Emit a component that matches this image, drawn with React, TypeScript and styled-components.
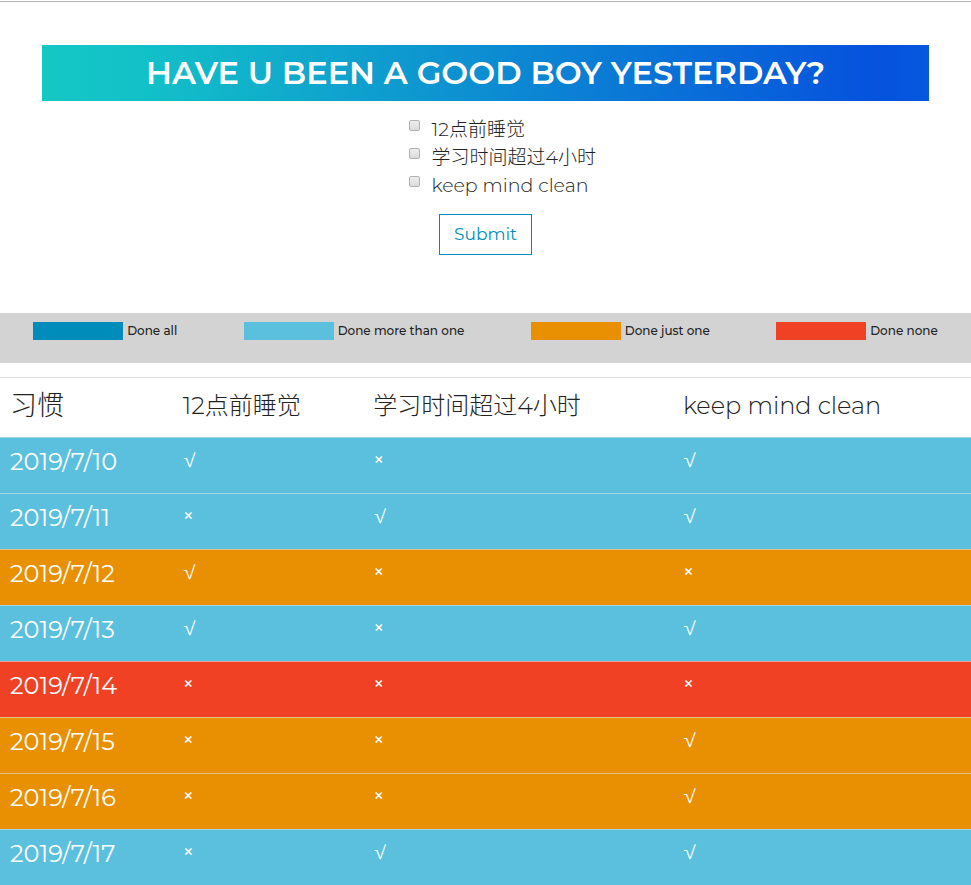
import React, { useState } from 'react';
import styled, { createGlobalStyle } from 'styled-components';

const GlobalStyle = createGlobalStyle`
  *, *::before, *::after { box-sizing: border-box; }
  body {
    margin: 0;
    background: #fff;
    color: #222;
    font-family: Montserrat, Inter, "Noto Sans CJK SC", sans-serif;
    font-weight: 300;
  }
`;

const palette = {
  all: '#008cba',
  many: '#5bc0de',
  one: '#e99002',
  none: '#f04124',
};

type Level = keyof typeof palette;

const Page = styled.div`
  padding-top: 1px;
`;

const Panel = styled.section`
  border-top: 1px solid #b4b4b4;
  padding: 43px 42px 58px;
`;

const Title = styled.h1`
  margin: 0 0 14px;
  background: linear-gradient(90deg, #14c8c5 0%, #12c0c8 12%, #0652dd 94%, #0658de 100%);
  color: #fff;
  font-size: 32px;
  line-height: 56px;
  font-weight: 600;
  text-align: center;
  white-space: nowrap;
`;

const Form = styled.form`
  display: flex;
  flex-direction: column;
`;

const Habits = styled.ul`
  list-style: none;
  margin: 0 0 15px calc(50% - 77px);
  padding: 0;
`;

const Habit = styled.li`
  display: flex;
  align-items: flex-start;
  gap: 12px;
  height: 28px;
`;

const Tick = styled.input`
  appearance: none;
  flex: none;
  width: 11px;
  height: 11px;
  margin: 5px 0 0;
  border: 1px solid #b2b2b2;
  border-radius: 2px;
  background: linear-gradient(#ededed, #dcdcdc);
  &:checked { background: #008cba; }
`;

const HabitLabel = styled.label`
  font-size: 19px;
  line-height: 30px;
  white-space: nowrap;
`;

const Submit = styled.button`
  align-self: center;
  padding: 0 14px;
  border: 1px solid #008cba;
  background: transparent;
  color: #008cba;
  font: inherit;
  font-size: 17px;
  line-height: 39px;
  font-weight: 400;
  cursor: pointer;
`;

const Legend = styled.ul`
  display: flex;
  justify-content: space-around;
  margin: 0 0 14px;
  padding: 9px 0 0;
  height: 50px;
  list-style: none;
  background: #d3d3d3;
`;

const LegendItem = styled.li`
  display: flex;
  gap: 4px;
  height: 18px;
  font-size: 12px;
  line-height: 18px;
  font-weight: 500;
  white-space: nowrap;
`;

const Swatch = styled.span<{ $level: Level }>`
  width: 90px;
  background: ${({ $level }) => palette[$level]};
`;

const Table = styled.table`
  width: 100%;
  table-layout: fixed;
  border-collapse: separate;
  border-spacing: 0;
`;

const Col = styled.col<{ $share: number }>`
  width: ${({ $share }) => $share}%;
`;

const HeadCell = styled.th<{ $large?: boolean }>`
  height: 60px;
  padding: 0 10px 4px;
  border-top: 1px solid #dee2e6;
  text-align: left;
  font-weight: 300;
  font-size: ${({ $large }) => ($large ? 27 : 24)}px;
  line-height: 36px;
  white-space: nowrap;
`;

const Row = styled.tr<{ $level: Level }>`
  background: ${({ $level }) => palette[$level]};
  color: #fff;
`;

const DateCell = styled.th`
  height: 56px;
  padding: 6px 10px;
  border-top: 1px solid rgba(222, 226, 230, 0.6);
  text-align: left;
  vertical-align: top;
  font-size: 24px;
  line-height: 36px;
  font-weight: 400;
`;

const MarkCell = styled.td<{ $done: boolean }>`
  height: 56px;
  padding: 10px;
  border-top: 1px solid rgba(222, 226, 230, 0.6);
  vertical-align: top;
  font-size: ${({ $done }) => ($done ? 16 : 19)}px;
  line-height: ${({ $done }) => ($done ? 22 : 24)}px;
  font-weight: ${({ $done }) => ($done ? 400 : 500)};
`;

const habits = ['12点前睡觉', '学习时间超过4小时', 'keep mind clean'];

const legend: { level: Level; text: string }[] = [
  { level: 'all', text: 'Done all' },
  { level: 'many', text: 'Done more than one' },
  { level: 'one', text: 'Done just one' },
  { level: 'none', text: 'Done none' },
];

const days: { date: string; done: boolean[] }[] = [
  { date: '2019/7/10', done: [true, false, true] },
  { date: '2019/7/11', done: [false, true, true] },
  { date: '2019/7/12', done: [true, false, false] },
  { date: '2019/7/13', done: [true, false, true] },
  { date: '2019/7/14', done: [false, false, false] },
  { date: '2019/7/15', done: [false, false, true] },
  { date: '2019/7/16', done: [false, false, true] },
  { date: '2019/7/17', done: [false, true, true] },
];

const levelOf = (done: boolean[]): Level => {
  const count = done.filter(Boolean).length;
  if (count === done.length) return 'all';
  if (count > 1) return 'many';
  return count === 1 ? 'one' : 'none';
};

export default function App() {
  const [checked, setChecked] = useState([false, false, false]);
  const toggle = (index: number) =>
    setChecked((prev) => prev.map((value, i) => (i === index ? !value : value)));

  return (
    <Page>
      <GlobalStyle />
      <Panel>
        <Title>HAVE U BEEN A GOOD BOY YESTERDAY?</Title>
        <Form onSubmit={(event) => event.preventDefault()}>
          <Habits>
            {habits.map((habit, i) => (
              <Habit key={habit}>
                <Tick
                  type="checkbox"
                  id={`habit-${i}`}
                  checked={checked[i]}
                  onChange={() => toggle(i)}
                />
                <HabitLabel htmlFor={`habit-${i}`}>{habit}</HabitLabel>
              </Habit>
            ))}
          </Habits>
          <Submit type="submit">Submit</Submit>
        </Form>
      </Panel>
      <Legend>
        {legend.map(({ level, text }) => (
          <LegendItem key={level}>
            <Swatch $level={level} />
            {text}
          </LegendItem>
        ))}
      </Legend>
      <Table>
        <colgroup>
          <Col $share={17.8} />
          <Col $share={19.6} />
          <Col $share={31.9} />
          <Col $share={30.7} />
        </colgroup>
        <thead>
          <tr>
            <HeadCell scope="col" $large>习惯</HeadCell>
            {habits.map((habit) => (
              <HeadCell key={habit} scope="col">{habit}</HeadCell>
            ))}
          </tr>
        </thead>
        <tbody>
          {days.map(({ date, done }) => (
            <Row key={date} $level={levelOf(done)}>
              <DateCell scope="row">{date}</DateCell>
              {done.map((ok, i) => (
                <MarkCell key={habits[i]} $done={ok}>{ok ? '√' : '×'}</MarkCell>
              ))}
            </Row>
          ))}
        </tbody>
      </Table>
    </Page>
  );
}
